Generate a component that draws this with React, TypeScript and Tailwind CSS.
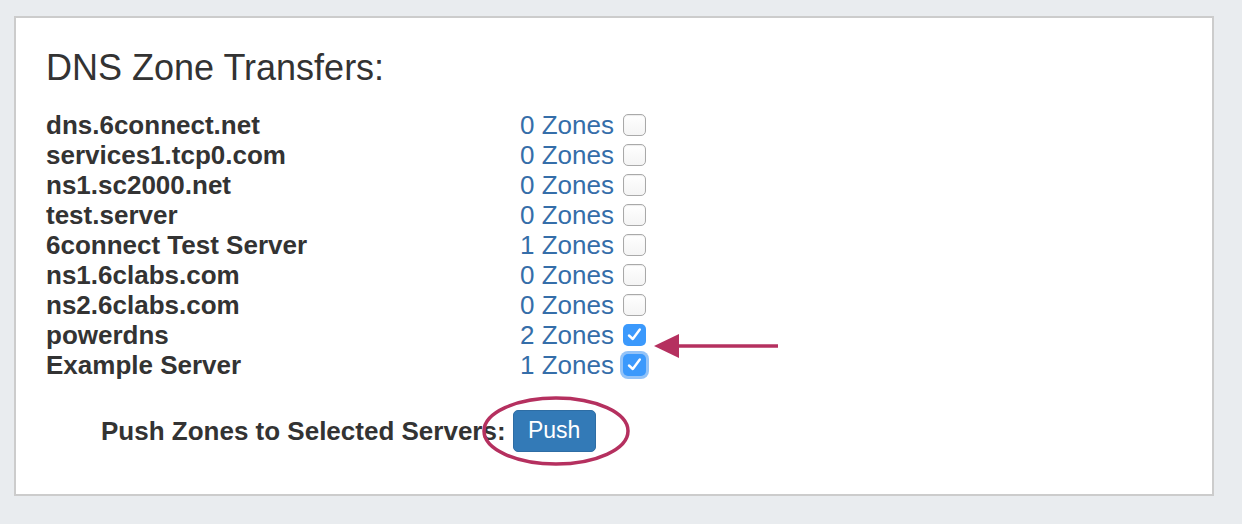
const servers = [
  { name: "dns.6connect.net", zones: 0, checked: false },
  { name: "services1.tcp0.com", zones: 0, checked: false },
  { name: "ns1.sc2000.net", zones: 0, checked: false },
  { name: "test.server", zones: 0, checked: false },
  { name: "6connect Test Server", zones: 1, checked: false },
  { name: "ns1.6clabs.com", zones: 0, checked: false },
  { name: "ns2.6clabs.com", zones: 0, checked: false },
  { name: "powerdns", zones: 2, checked: true },
  { name: "Example Server", zones: 1, checked: true, focused: true },
]

function Checkbox({ checked, focused }: { checked: boolean; focused?: boolean }) {
  if (checked) {
    return (
      <span
        className={`block h-[22px] w-[23px] rounded-[5px] bg-[#3b99fc] ${
          focused ? "ring-[3px] ring-[#93c3f8]" : ""
        }`}
      >
        <svg width="23" height="22" viewBox="0 0 23 22" fill="none">
          <path d="M6 11.5 L9.8 15 L16.8 5.5" stroke="white" strokeWidth="2.4" strokeLinecap="round" strokeLinejoin="round" />
        </svg>
      </span>
    )
  }
  return (
    <span className="block h-[22px] w-[23px] rounded-[5px] border border-[#a9a9a9] bg-gradient-to-b from-white to-[#f4f4f4] shadow-[inset_0_1px_1px_rgba(0,0,0,0.08)]" />
  )
}

export default function App() {
  return (
    <div className="relative min-h-[524px] w-full bg-[#e9ecef] pt-4 pl-[14px] font-['Liberation_Sans',Arial,sans-serif]">
      <div className="h-[480px] w-[1200px] border-2 border-[#cccccc] bg-white pt-[30px] pl-[30px]">
        <h2 className="text-[36px] leading-[1.1] text-[#333333]">DNS Zone Transfers:</h2>

        <div className="mt-[22px]">
          {servers.map((s) => (
            <div key={s.name} className="flex h-[30px] items-center text-[26px] leading-[30px]">
              <span className="w-[474px] font-bold text-[#333333]">{s.name}</span>
              <span className="text-[#356ea9]">{s.zones} Zones</span>
              <span className="ml-[9px]">
                <Checkbox checked={s.checked} focused={s.focused} />
              </span>
            </div>
          ))}
        </div>

        <div className="mt-[30px] flex items-center pl-[55px]">
          <span className="text-[26px] font-bold leading-[30px] text-[#333333]">Push Zones to Selected Servers:</span>
          <button className="ml-[7px] flex h-[42px] w-[83px] items-center justify-center rounded-[5px] border border-[#2e6da4] bg-[#337ab7] text-[23px] text-white">
            Push
          </button>
        </div>
      </div>

      <svg className="pointer-events-none absolute left-0 top-0" width="1242" height="524" viewBox="0 0 1242 524">
        <ellipse cx="556" cy="431" rx="72" ry="33" fill="none" stroke="#b5305f" strokeWidth="3.5" />
        <line x1="674" y1="346" x2="778" y2="346" stroke="#b5305f" strokeWidth="3.5" />
        <polygon points="654,346 679,334 679,358" fill="#b5305f" />
      </svg>
    </div>
  )
}
